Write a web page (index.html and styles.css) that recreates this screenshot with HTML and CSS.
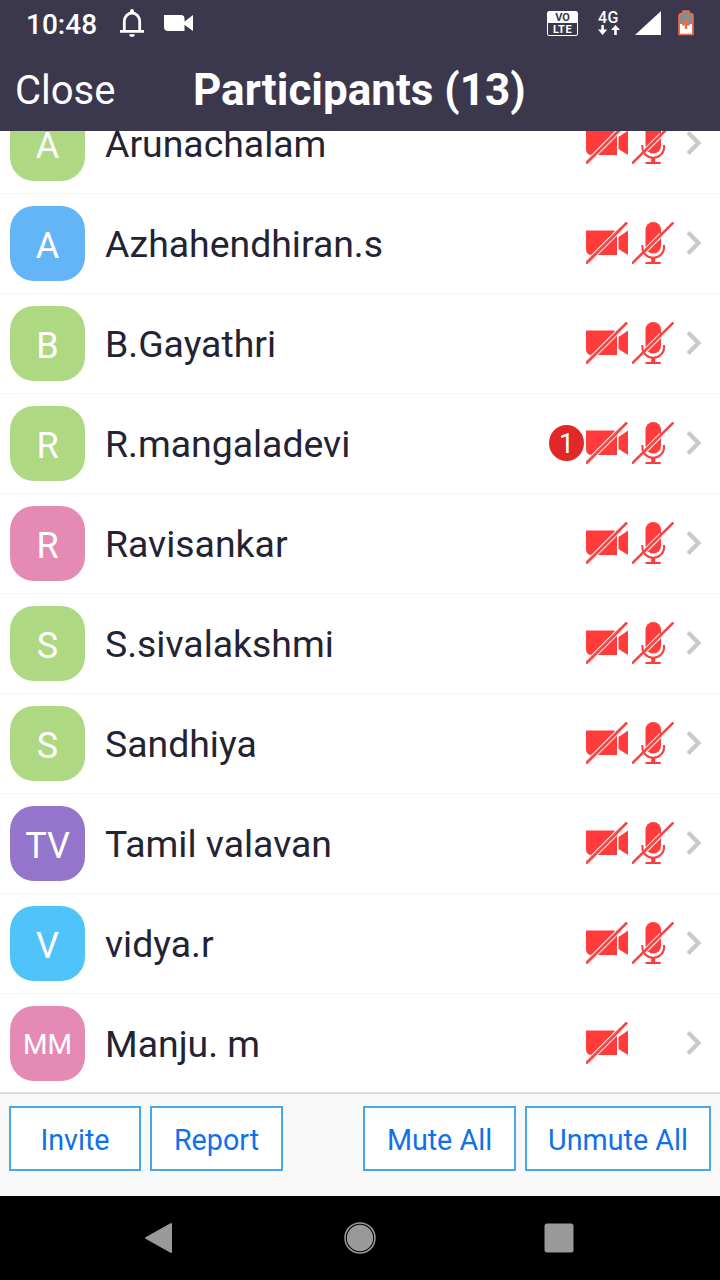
FILE: index.html
```html
<!DOCTYPE html>
<html lang="en">

<head>
    <meta charset="UTF-8">
    <meta name="viewport" content="width=device-width, initial-scale=1.0">
    <title>Participants</title>
    <link rel="stylesheet" href="styles.css">
</head>

<body>
    <!-- Shared icons -->
    <svg class="sprite" width="0" height="0">
        <symbol id="cam-off" viewBox="0 0 42 42">
            <path fill="#ff3b3b" d="M0 8.500H28L31 11V33H6Q0 33 0 27Z" />
            <path fill="#ff3b3b" d="M32.500 15L42 8.500V33L32.500 27Z" />
            <path stroke="#ffd9d9" stroke-width="5" d="M1 40.500L35 6.500" />
            <path stroke="#f04646" stroke-width="2.600" d="M0 41.500L41 .5" />
        </symbol>
        <symbol id="mic-off" viewBox="0 0 42 42">
            <rect fill="#ff3b3b" x="13.500" y="0" width="15.500" height="31.500" rx="7.750" />
            <path fill="none" stroke="#ff3b3b" stroke-width="2" d="M10.400 23v2.500a10.800 10.300 0 0 0 21.600 0V23" />
            <path fill="#ff3b3b" d="M19.200 36h4v4h5.500v2H13.500v-2h5.700z" />
            <path stroke="#ffd9d9" stroke-width="4.800" d="M13 29L29 13" />
            <path stroke="#f04646" stroke-width="2.600" d="M0 41.500L41.500 .5" />
        </symbol>
        <symbol id="chevron" viewBox="0 0 16 24">
            <path fill="none" stroke="#c9c9c9" stroke-width="4.200" d="M2 1.500L12.500 12L2 22.500" />
        </symbol>
    </svg>

    <div class="status-bar">
        <span class="time">10:48</span>
        <svg class="bell" width="24" height="28" viewBox="0 0 24 28">
            <path fill="none" stroke="#fff" stroke-width="2.800" d="M4.300 22V12.500a7.700 8.500 0 0 1 15.400 0V22" />
            <path fill="#fff" d="M0 21h24v2.800H0zM10 4V2a2 2 0 0 1 4 0v2zM9.300 25.200h5.400a2.700 2.600 0 0 1-5.400 0z" />
        </svg>
        <svg class="video" width="30" height="18" viewBox="0 0 30 18">
            <path fill="#fff" d="M0 1H17Q20.500 1 20.500 4.500V17H4Q0 17 0 13ZM20 8L29 1V17L20 10.500Z" />
        </svg>
        <div class="status-right">
            <div class="volte"><span class="vo">VO</span><span class="lte">LTE</span></div>
            <div class="network">
                <span>4G</span>
                <svg width="22" height="10" viewBox="0 0 22 10">
                    <path fill="#fff" d="M3.300 0h2.600v4.500H9.200L4.600 10L0 4.500h3.300zM16.200 10h2.600V5H22L17.500 0L13 5h3.200z" />
                </svg>
            </div>
            <svg class="signal" width="26" height="24" viewBox="0 0 26 24">
                <path fill="#fff" d="M26 0V24H0Z" />
            </svg>
            <svg class="battery" width="16" height="26" viewBox="0 0 16 26">
                <path fill="#8a8a90" stroke="#f26b43" stroke-width="1.600" d="M5 1h6v2.500h2.500L15 5v19.500H1V5l1.500-1.500H5z" />
                <path fill="#fff" d="M2 14h12v9.700H2z" />
                <path fill="#f26b43" d="M6.800 9h2.400v4H12v2.500H9.200V19H6.800v-3.500H4V13h2.800z" />
            </svg>
        </div>
    </div>

    <header class="header">
        <span class="close">Close</span>
        <h1>Participants (13)</h1>
    </header>

    <ul class="list">
        <li class="row">
            <span class="avatar green">A</span>
            <span class="name">Arunachalam</span>
            <svg class="icon"><use href="#cam-off" /></svg>
            <svg class="icon"><use href="#mic-off" /></svg>
            <svg class="arrow"><use href="#chevron" /></svg>
        </li>
        <li class="row">
            <span class="avatar blue">A</span>
            <span class="name">Azhahendhiran.s</span>
            <svg class="icon"><use href="#cam-off" /></svg>
            <svg class="icon"><use href="#mic-off" /></svg>
            <svg class="arrow"><use href="#chevron" /></svg>
        </li>
        <li class="row">
            <span class="avatar green">B</span>
            <span class="name">B.Gayathri</span>
            <svg class="icon"><use href="#cam-off" /></svg>
            <svg class="icon"><use href="#mic-off" /></svg>
            <svg class="arrow"><use href="#chevron" /></svg>
        </li>
        <li class="row">
            <span class="avatar green">R</span>
            <span class="name">R.mangaladevi</span>
            <span class="badge">1</span>
            <svg class="icon"><use href="#cam-off" /></svg>
            <svg class="icon"><use href="#mic-off" /></svg>
            <svg class="arrow"><use href="#chevron" /></svg>
        </li>
        <li class="row">
            <span class="avatar pink">R</span>
            <span class="name">Ravisankar</span>
            <svg class="icon"><use href="#cam-off" /></svg>
            <svg class="icon"><use href="#mic-off" /></svg>
            <svg class="arrow"><use href="#chevron" /></svg>
        </li>
        <li class="row">
            <span class="avatar green">S</span>
            <span class="name">S.sivalakshmi</span>
            <svg class="icon"><use href="#cam-off" /></svg>
            <svg class="icon"><use href="#mic-off" /></svg>
            <svg class="arrow"><use href="#chevron" /></svg>
        </li>
        <li class="row">
            <span class="avatar green">S</span>
            <span class="name">Sandhiya</span>
            <svg class="icon"><use href="#cam-off" /></svg>
            <svg class="icon"><use href="#mic-off" /></svg>
            <svg class="arrow"><use href="#chevron" /></svg>
        </li>
        <li class="row">
            <span class="avatar purple">TV</span>
            <span class="name">Tamil valavan</span>
            <svg class="icon"><use href="#cam-off" /></svg>
            <svg class="icon"><use href="#mic-off" /></svg>
            <svg class="arrow"><use href="#chevron" /></svg>
        </li>
        <li class="row">
            <span class="avatar sky">V</span>
            <span class="name">vidya.r</span>
            <svg class="icon"><use href="#cam-off" /></svg>
            <svg class="icon"><use href="#mic-off" /></svg>
            <svg class="arrow"><use href="#chevron" /></svg>
        </li>
        <li class="row">
            <span class="avatar pink small">MM</span>
            <span class="name">Manju. m</span>
            <svg class="icon"><use href="#cam-off" /></svg>
            <span class="icon"></span>
            <svg class="arrow"><use href="#chevron" /></svg>
        </li>
    </ul>

    <footer class="actions">
        <button type="button" class="btn invite">Invite</button>
        <button type="button" class="btn report">Report</button>
        <button type="button" class="btn mute">Mute All</button>
        <button type="button" class="btn unmute">Unmute All</button>
    </footer>

    <nav class="nav-bar">
        <svg width="28" height="32" viewBox="0 0 28 32">
            <path fill="#999" stroke="#999" stroke-width="2" stroke-linejoin="round" d="M27 2V30L2 16Z" />
        </svg>
        <svg width="32" height="32" viewBox="0 0 32 32">
            <circle cx="16" cy="16" r="13.200" fill="#999" />
            <circle cx="16" cy="16" r="15" fill="none" stroke="#999" stroke-width="1.500" />
        </svg>
        <svg width="30" height="30" viewBox="0 0 30 30">
            <rect x=".5" y=".5" width="29" height="29" rx="2.500" fill="#999" />
        </svg>
    </nav>
</body>

</html>
```
FILE: styles.css
```css
/* Reset */
* {
    margin: 0;
    padding: 0;
    box-sizing: border-box;
    font-family: Roboto, sans-serif;
}

body {
    width: 720px;
    height: 1280px;
    display: flex;
    flex-direction: column;
    background: #fff;
    overflow: hidden;
}

svg {
    display: block;
    flex: none;
}

.sprite {
    position: absolute;
}

/* Status bar */
.status-bar {
    height: 48px;
    display: flex;
    align-items: center;
    padding: 0 25px 2px 26px;
    background: #3b384d;
    color: #fff;
}

.time {
    width: 94px;
    font-size: 28px;
    font-weight: 500;
    line-height: 46px;
    padding-top: 3px;
}

.video {
    margin-left: 20px;
}

.status-right {
    display: flex;
    align-items: center;
    margin-left: auto;
}

.volte {
    width: 31px;
    height: 25px;
    border: 1.500px solid #fff;
    border-radius: 2px;
    font-size: 11px;
    font-weight: 700;
    line-height: 11px;
    text-align: center;
}

.volte span {
    display: block;
}

.vo {
    background: #fff;
    color: #3b384d;
}

.lte {
    letter-spacing: 0.500px;
    line-height: 13px;
}

.network {
    width: 22px;
    margin: 0 15px 0 20px;
    font-size: 16px;
    font-weight: 500;
    line-height: 14px;
    letter-spacing: 0.500px;
}

.network span {
    display: block;
}

.battery {
    margin-left: 17px;
    margin-right: 1px;
}

/* Header */
.header {
    height: 83px;
    display: flex;
    align-items: center;
    background: #3b384d;
    color: #fff;
    padding: 1px 15px 0;
}

.close {
    width: 178px;
    font-size: 40px;
}

h1 {
    font-size: 44px;
    font-weight: 700;
    white-space: nowrap;
}

/* Participants, scrolled to the bottom */
.list {
    height: 963px;
    display: flex;
    flex-direction: column;
    justify-content: flex-end;
    overflow: hidden;
    list-style: none;
}

.row {
    flex: none;
    height: 100px;
    display: flex;
    align-items: center;
    padding: 0 18px 1px 10px;
    border-bottom: 1px solid #f7f7f7;
}

.row:last-child {
    padding-bottom: 0;
    border-bottom: 2px solid #dcdcdc;
}

.avatar {
    width: 75px;
    height: 75px;
    border-radius: 24px;
    color: #fff;
    font-size: 36px;
    line-height: 80px;
    text-align: center;
}

.avatar.small {
    font-size: 28px;
    line-height: 77px;
}

.green {
    background: #afd883;
}

.blue {
    background: #64b4f8;
}

.pink {
    background: #e58ab5;
}

.purple {
    background: #9376cb;
}

.sky {
    background: #50c3fa;
}

.name {
    flex: 1;
    margin-left: 20px;
    padding-top: 2px;
    color: #232333;
    font-size: 37.400px;
}

.badge {
    width: 35px;
    height: 36px;
    margin-right: 2px;
    border-radius: 50%;
    background: #e02828;
    color: #fff;
    font-size: 27px;
    line-height: 38px;
    text-align: center;
}

.icon {
    width: 42px;
    height: 42px;
    margin-right: 4px;
}

.arrow {
    width: 16px;
    height: 24px;
    margin-left: 8px;
}

/* Bottom buttons */
.actions {
    height: 102px;
    display: flex;
    gap: 9px;
    padding: 12px 9px;
    background: #f8f8f8;
}

.btn {
    height: 65px;
    padding-top: 3px;
    border: 2px solid #47a7ea;
    background: #fff;
    color: #0e71eb;
    font-size: 28.700px;
}

.invite {
    width: 132px;
}

.report {
    width: 133px;
}

.mute {
    width: 153px;
    margin-left: auto;
}

.unmute {
    width: 186px;
}

/* System navigation */
.nav-bar {
    height: 84px;
    display: flex;
    align-items: center;
    padding-left: 144px;
    background: #000;
}

.nav-bar svg:nth-child(2) {
    margin: 0 168px 0 172px;
}
```
